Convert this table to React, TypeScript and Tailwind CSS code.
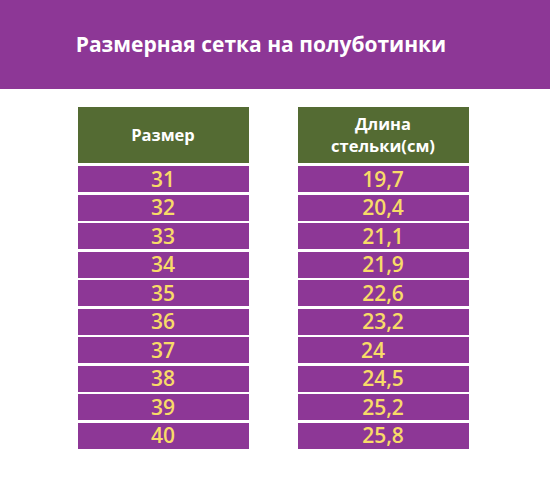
const sizes = ['31', '32', '33', '34', '35', '36', '37', '38', '39', '40'];
const lengths = ['19,7', '20,4', '21,1', '21,9', '22,6', '23,2', '24', '24,5', '25,2', '25,8'];

function Column({ title, values }: { title: React.ReactNode; values: string[] }) {
  return (
    <div className="flex w-[171px] flex-col gap-[2.5px]">
      <div className="mb-[0.5px] flex h-[56px] items-center justify-center bg-[#546b33] text-center text-[16.5px] font-bold leading-[22px] text-white">
        {title}
      </div>
      {values.map((v) => (
        <div
          key={v}
          className="flex h-[26px] items-center justify-center bg-[#8d3796] text-[21px] font-semibold leading-none text-[#f8db68]"
        >
          <span className={v === '24' ? 'pr-[20px]' : ''}>{v}</span>
        </div>
      ))}
    </div>
  );
}

export default function App() {
  return (
    <div className="h-[501px] w-[550px] bg-white font-['Open_Sans',sans-serif]">
      <div className="flex h-[89px] items-center justify-center bg-[#8d3796] pr-[28px]">
        <h1 className="text-[21px] font-bold text-white">Размерная сетка на полуботинки</h1>
      </div>
      <div className="mt-[18px] flex justify-center gap-[49px] pr-[4px]">
        <Column title="Размер" values={sizes} />
        <Column
          title={
            <span>
              Длина
              <br />
              стельки(см)
            </span>
          }
          values={lengths}
        />
      </div>
    </div>
  );
}
